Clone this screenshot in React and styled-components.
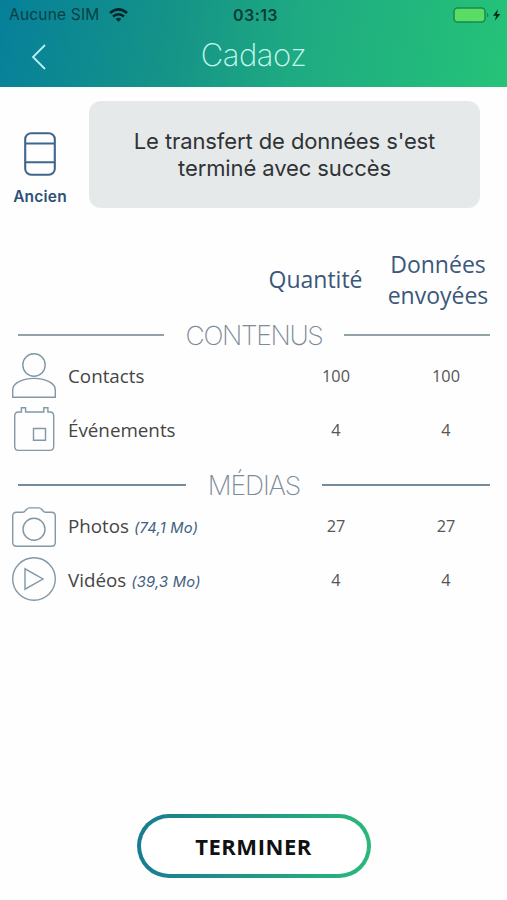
import React from "react";
import styled, { createGlobalStyle } from "styled-components";

const GlobalStyle = createGlobalStyle`
  * { box-sizing: border-box; }
  body { margin: 0; background: #fefefe; }
`;

const Screen = styled.main`
  width: 507px;
  height: 900px;
  display: flex;
  flex-direction: column;
  overflow: hidden;
  background: #fefefe;
  font-family: "Open Sans", "Noto Sans", sans-serif;
  white-space: nowrap;
`;

const Header = styled.header`
  height: 87px;
  flex: none;
  background: linear-gradient(100deg, #06809a 0%, #159487 35%, #1eaa82 58%, #25c378 100%);
`;

const StatusBar = styled.div`
  height: 29px;
  display: grid;
  grid-template-columns: 1fr auto 1fr;
  align-items: center;
  padding: 0 5px 0 9px;
  font-family: Inter, sans-serif;
  font-size: 15.5px;
  color: #073f45;
`;

const Carrier = styled.div`
  display: flex;
  align-items: center;
  gap: 9px;
  letter-spacing: 0.2px;
`;

const Clock = styled.div`
  font-weight: 600;
  font-size: 16px;
  letter-spacing: 0.4px;
  color: #083d36;
`;

const Battery = styled.div`
  display: flex;
  justify-content: flex-end;
`;

const NavBar = styled.nav`
  height: 58px;
  display: grid;
  grid-template-columns: 78px 1fr 78px;
  align-items: center;
`;

const BackButton = styled.button`
  display: flex;
  justify-content: center;
  padding: 0 0 2px;
  border: 0;
  background: none;
`;

const Title = styled.h1`
  margin: 0 0 7px;
  text-align: center;
  font: 200 31px/40px Inter, sans-serif;
  letter-spacing: -0.5px;
  color: #c5f8ee;
`;

const Summary = styled.section`
  height: 121px;
  flex: none;
  display: grid;
  grid-template-columns: 80px 391px;
  column-gap: 9px;
  padding-top: 14px;
`;

const Device = styled.div`
  display: flex;
  flex-direction: column;
  align-items: center;
  padding-top: 31px;
  gap: 11px;
`;

const DeviceLabel = styled.span`
  font: 600 15.5px/20px Inter, sans-serif;
  letter-spacing: 0.2px;
  color: #2d5077;
`;

const Message = styled.p`
  margin: 0;
  height: 107px;
  display: flex;
  align-items: center;
  justify-content: center;
  text-align: center;
  border-radius: 12px;
  background: #e6e9ea;
  font: 400 22px/27px Inter, sans-serif;
  letter-spacing: -0.1px;
  color: #303335;
`;

const ColumnHeads = styled.div`
  height: 114px;
  flex: none;
  display: grid;
  grid-template-columns: 123px 122px;
  justify-content: end;
  align-items: center;
  padding: 30px 8px 0 0;
`;

const ColumnHead = styled.div`
  padding-bottom: ${(p) => (p.$raised ? "2px" : "0")};
  text-align: center;
  font-size: 23px;
  line-height: 31px;
  color: #3b587a;
`;

const Section = styled.section`
  margin-bottom: 15px;
`;

const Divider = styled.div`
  height: 27px;
  display: flex;
  align-items: center;
  gap: 22px;
  padding: 0 17px 2px 18px;
  &::before,
  &::after {
    content: "";
    flex: 1;
    height: 2px;
    background: ${(p) => p.$line};
  }
`;

const DividerTitle = styled.h2`
  margin: 1px 0 0;
  font: 200 26.5px/27px Inter, sans-serif;
  letter-spacing: ${(p) => p.$spacing};
  color: #7d8b98;
`;

const Row = styled.div`
  height: 54px;
  display: grid;
  grid-template-columns: 44px 1fr 110px 110px;
  align-items: center;
  padding: 0 6px 0 12px;
`;

const RowIcon = styled.svg`
  display: block;
  fill: none;
  stroke: #8298a6;
  stroke-width: 1.4;
`;

const Label = styled.div`
  padding-left: 12px;
  font-size: 18.8px;
  line-height: 26px;
  color: #454545;
`;

const FileSize = styled.span`
  font: italic 400 14.7px/20px Inter, sans-serif;
  letter-spacing: 0.25px;
  color: #41607f;
`;

const Count = styled.div`
  text-align: center;
  font-size: 16.3px;
  color: #555;
`;

const Footer = styled.footer`
  margin-top: auto;
  padding-bottom: 22px;
  display: flex;
  justify-content: center;
`;

const FinishButton = styled.button`
  width: 234px;
  height: 64px;
  padding: 0;
  border: 4px solid transparent;
  border-radius: 32px;
  background:
    linear-gradient(#fff, #fff) padding-box,
    linear-gradient(90deg, #177c91, #219a85 52%, #2bb87a) border-box;
  font: 700 22px/28px "Open Sans", sans-serif;
  letter-spacing: 0.55px;
  color: #111;
`;

const icons = {
  contact: (
    <>
      <circle cx="22" cy="12" r="11.2" />
      <path d="M.7 44.3v-7.6c0-7 11-11.3 21.3-11.3s21.3 4.3 21.3 11.3v7.6z" />
    </>
  ),
  event: (
    <>
      <path d="M7.7 5H6.5Q2.7 5 2.7 9v30.2q0 4.2 4 4.2h31q4 0 4-4.2V9q0-4-3.8-4h-2V.8h-4.1V5H13.6V.8H9.4V5z" />
      <path d="M21.5 21.5h12v11.8h-12z" />
    </>
  ),
  photo: (
    <>
      <path d="M4.5 9.2h6q2 0 2.7-1.3 2-3 4-3h9.6q2.5 0 4.2 3 .8 1.3 2.7 1.3h5.8q3.8 0 3.8 4v26q0 4-3.8 4h-35q-3.8 0-3.8-4v-26q0-4 3.8-4z" />
      <circle cx="22" cy="26.2" r="11" />
    </>
  ),
  video: (
    <>
      <circle cx="22" cy="22" r="21.3" />
      <path d="M13 11.8v20.4L31 22z" />
    </>
  ),
};

const sections = [
  {
    title: "CONTENUS",
    line: "#91a3a7",
    spacing: "-1.35px",
    rows: [
      { icon: "contact", label: "Contacts", quantity: 100, sent: 100 },
      { icon: "event", label: "Événements", quantity: 4, sent: 4 },
    ],
  },
  {
    title: "MÉDIAS",
    line: "#768b99",
    spacing: "-1.1px",
    rows: [
      { icon: "photo", label: "Photos", size: "(74,1 Mo)", quantity: 27, sent: 27 },
      { icon: "video", label: "Vidéos", size: "(39,3 Mo)", quantity: 4, sent: 4 },
    ],
  },
];

export default function App() {
  return (
    <Screen>
      <GlobalStyle />
      <Header>
        <StatusBar>
          <Carrier>
            <span>Aucune SIM</span>
            <svg width="19" height="14" viewBox="0 0 19 14" fill="none" stroke="#04242a" strokeWidth="2.5">
              <path d="M1 5q8.5-7.2 17 0M4 8.5q5.5-4.6 11 0" />
              <path d="M6.7 11q2.8-2.3 5.6 0L9.5 13.8z" fill="#04242a" stroke="none" />
            </svg>
          </Carrier>
          <Clock>03:13</Clock>
          <Battery>
            <svg width="49" height="16" viewBox="0 0 49 16">
              <rect x="1" y="1" width="31" height="14" rx="3.5" fill="#5bdc62" stroke="#148b56" strokeWidth="1.5" />
              <path d="M34 5.5q3 2.5 0 5z" fill="#148b56" />
              <path d="M45 2.2 40 8.8h3.2l-1.4 5L47.4 7H44z" fill="#03291e" />
            </svg>
          </Battery>
        </StatusBar>
        <NavBar>
          <BackButton aria-label="Retour">
            <svg width="16" height="26" viewBox="0 0 16 26" fill="none" stroke="#bdeef5" strokeWidth="1.8">
              <path d="M14 1 2 13l12 12" />
            </svg>
          </BackButton>
          <Title>Cadaoz</Title>
        </NavBar>
      </Header>

      <Summary>
        <Device>
          <svg width="32" height="44" viewBox="0 0 32 44" fill="none" stroke="#40668a" strokeWidth="2.1">
            <rect x="1.2" y="1.2" width="29.6" height="41.6" rx="6" />
            <path d="M1.2 11.5h29.6M1.2 30.3h29.6" />
          </svg>
          <DeviceLabel>Ancien</DeviceLabel>
        </Device>
        <Message>
          Le transfert de données s'est
          <br />
          terminé avec succès
        </Message>
      </Summary>

      <ColumnHeads>
        <ColumnHead $raised>Quantité</ColumnHead>
        <ColumnHead>
          Données
          <br />
          envoyées
        </ColumnHead>
      </ColumnHeads>

      {sections.map((section) => (
        <Section key={section.title}>
          <Divider $line={section.line}>
            <DividerTitle $spacing={section.spacing}>{section.title}</DividerTitle>
          </Divider>
          {section.rows.map((row) => (
            <Row key={row.label}>
              <RowIcon width="44" height="46" viewBox="0 0 44 46">
                {icons[row.icon]}
              </RowIcon>
              <Label>
                {row.label} {row.size && <FileSize>{row.size}</FileSize>}
              </Label>
              <Count>{row.quantity}</Count>
              <Count>{row.sent}</Count>
            </Row>
          ))}
        </Section>
      ))}

      <Footer>
        <FinishButton>TERMINER</FinishButton>
      </Footer>
    </Screen>
  );
}
